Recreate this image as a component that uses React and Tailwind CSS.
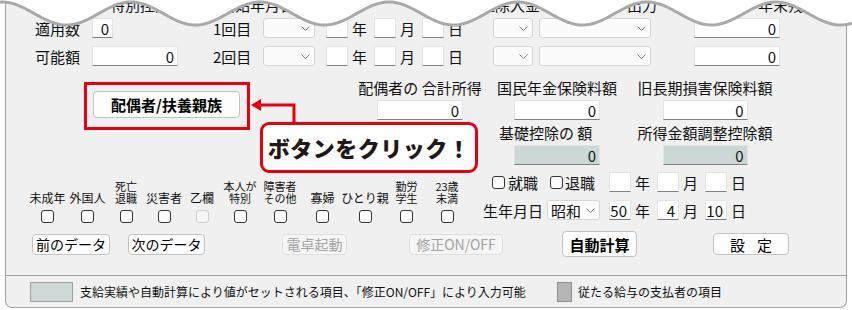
import React from 'react';

const Chevron = () => (
  <svg width="9" height="5" viewBox="0 0 9 5" className="shrink-0">
    <polyline points="0.5,0.5 4.5,4.5 8.5,0.5" fill="none" stroke="#7c7c7c" strokeWidth="1" />
  </svg>
);

const Box = ({ className = '', children, gray }) => (
  <div
    className={`h-[20px] flex items-center justify-end pr-[3px] text-[15px] leading-none border border-[#e4e4e4] border-b-[#808080] ${
      gray ? 'bg-[#cbd8d8]' : 'bg-white'
    } ${className}`}
  >
    {children}
  </div>
);

const Select = ({ className = '', children }) => (
  <div
    className={`h-[20px] flex items-center justify-between pl-[3px] pr-[4px] bg-[#fbfbfb] border border-[#d6d6d6] rounded-[3px] text-[15px] leading-none ${className}`}
  >
    <span>{children}</span>
    <Chevron />
  </div>
);

const Unit = ({ children }) => (
  <div className="w-[26px] pl-[4px] text-[15px] leading-none">{children}</div>
);

const Check = ({ disabled }) => (
  <div
    className={`w-[13px] h-[13px] rounded-[3px] border shrink-0 ${
      disabled ? 'border-[#cdcdcd] bg-[#f5f5f5]' : 'border-[#333333] bg-white'
    }`}
  />
);

const Btn = ({ className = '', children, disabled, bold }) => (
  <div
    className={`flex items-center justify-center border rounded-[4px] leading-none ${
      disabled
        ? 'text-[#a3a3a3] border-[#dedede] bg-[#f5f5f5]'
        : 'text-black border-[#c2c2c2] bg-[#fdfdfd]'
    } ${bold ? 'font-bold text-[15px]' : 'text-[14px]'} ${className}`}
  >
    {children}
  </div>
);

const DateRow = ({ y = '', m = '', d = '' }) => (
  <>
    <Box className="w-[22px]">{y}</Box>
    <Unit>年</Unit>
    <Box className="w-[22px]">{m}</Box>
    <Unit>月</Unit>
    <Box className="w-[22px]">{d}</Box>
    <Unit>日</Unit>
  </>
);

const checks = [
  { w: 'w-[41px]', lines: ['未成年'] },
  { w: 'w-[39px]', lines: ['外国人'] },
  { w: 'w-[38px]', lines: ['死亡', '退職'] },
  { w: 'w-[38px]', lines: ['災害者'] },
  { w: 'w-[38px]', lines: ['乙欄'], disabled: true },
  { w: 'w-[38px]', lines: ['本人が', '特別'] },
  { w: 'w-[42px]', lines: ['障害者', 'その他'] },
  { w: 'w-[43px]', lines: ['寡婦'] },
  { w: 'w-[42px]', lines: ['ひとり親'] },
  { w: 'w-[41px]', lines: ['勤労', '学生'] },
  { w: 'w-[40px]', lines: ['23歳', '未満'] },
];

const Wave = () => {
  const pts = [];
  for (let x = 0; x <= 852; x += 2) {
    const y = 13.5 - 11.5 * Math.cos((2 * Math.PI * (x - 131)) / 129);
    pts.push(`${x},${y.toFixed(2)}`);
  }
  const line = pts.join(' ');
  return (
    <svg className="absolute top-0 left-0" width="852" height="34" viewBox="0 0 852 34">
      <polygon points={`0,0 ${line} 852,0`} fill="#ffffff" />
      <polyline points={line} fill="none" stroke="#a9a9a9" strokeWidth="3" />
    </svg>
  );
};

const App = () => {
  return (
    <div className="relative w-[852px] h-[310px] bg-white overflow-hidden font-['Noto_Sans_CJK_JP',sans-serif] text-[#111111]">
      <div className="ml-[5px] w-[842px] h-[308px] flex flex-col border-x border-b border-[#a0a0a0] rounded-b-[7px] bg-[#f0f0f0]">
        <div className="h-[276px] shrink-0 border-b border-[#a0a0a0] flex flex-col">
          {/* header labels, mostly hidden by the wave */}
          <div className="h-[18px] flex items-start text-[15px] leading-[15px]">
            <span className="ml-[104px] w-[60px] -mt-[3px]">特別控除</span>
            <span className="ml-[50px] w-[75px] -mt-[3px]">開始年月日</span>
            <span className="ml-[185px] w-[60px] -mt-[3px]">控除入金</span>
            <span className="ml-[87px] w-[30px] -mt-[3px]">出力</span>
            <span className="ml-[101px] w-[60px] -mt-[3px]">年末残高</span>
          </div>

          {/* row 1 */}
          <div className="h-[20px] flex items-center">
            <div className="ml-[29px] w-[57px] text-[15px] leading-none">適用数</div>
            <Box className="w-[21px]">0</Box>
            <div className="ml-[100px] w-[50px] text-[15px] leading-none">1回目</div>
            <Select className="w-[52px]" />
            <div className="ml-[11px] flex items-center">
              <DateRow />
            </div>
            <Select className="ml-[23px] w-[40px]" />
            <Select className="ml-[6px] w-[112px]" />
            <Box className="ml-[43px] w-[86px]">0</Box>
          </div>

          {/* row 2 */}
          <div className="mt-[8px] h-[20px] flex items-center">
            <div className="ml-[29px] w-[57px] text-[15px] leading-none">可能額</div>
            <Box className="w-[86px]">0</Box>
            <div className="ml-[35px] w-[50px] text-[15px] leading-none">2回目</div>
            <Select className="w-[52px]" />
            <div className="ml-[11px] flex items-center">
              <DateRow />
            </div>
            <Select className="ml-[23px] w-[40px]" />
            <Select className="ml-[6px] w-[112px]" />
            <Box className="ml-[43px] w-[86px]">0</Box>
          </div>

          {/* spouse / deductions */}
          <div className="mt-[13px] flex items-start">
            <div className="ml-[78px] mt-[3px] border-[3px] border-[#e50012] pl-[6px] pt-[6px] pr-[7px] pb-[9px]">
              <Btn bold className="w-[147px] h-[27px]">配偶者/扶養親族</Btn>
            </div>
            <div className="ml-[105px] w-[130px] flex flex-col items-center">
              <div className="text-[15px] leading-[17px] whitespace-nowrap">配偶者の 合計所得</div>
              <Box className="mt-[4px] w-[86px]">0</Box>
            </div>
            <div className="ml-[7px] w-[130px] flex flex-col items-center">
              <div className="text-[15px] leading-[17px] whitespace-nowrap">国民年金保険料額</div>
              <Box className="mt-[4px] w-[86px]">0</Box>
              <div className="self-start ml-[7px] mt-[4px] text-[15px] leading-[17px] whitespace-nowrap">基礎控除の 額</div>
              <Box gray className="mt-[4px] w-[86px]">0</Box>
            </div>
            <div className="ml-[8px] w-[150px] flex flex-col items-center">
              <div className="text-[15px] leading-[17px] whitespace-nowrap">旧長期損害保険料額</div>
              <Box className="mt-[4px] w-[85px]">0</Box>
              <div className="mt-[4px] text-[15px] leading-[17px] whitespace-nowrap">所得金額調整控除額</div>
              <Box gray className="mt-[4px] w-[85px]">0</Box>
            </div>
          </div>

          {/* checkboxes and dates */}
          <div className="mt-[5px] flex items-start">
            <div className="ml-[21px] pt-[9px] flex">
              {checks.map((c, i) => (
                <div key={i} className={`${c.w} flex flex-col items-center`}>
                  <div
                    className={`h-[25px] flex flex-col justify-end items-center whitespace-nowrap ${
                      c.lines.length > 1 ? 'text-[11px] leading-[12px]' : 'text-[12px] leading-[12px]'
                    }`}
                  >
                    {c.lines.map((l, j) => (
                      <span key={j}>{l}</span>
                    ))}
                  </div>
                  <div className="mt-[6px]">
                    <Check disabled={c.disabled} />
                  </div>
                </div>
              ))}
            </div>
            <div className="ml-[16px] flex flex-col">
              <div className="mt-[2px] h-[20px] flex items-center text-[15px] leading-none">
                <div className="ml-[9px]">
                  <Check />
                </div>
                <span className="ml-[3px] w-[30px]">就職</span>
                <div className="ml-[12px]">
                  <Check />
                </div>
                <span className="ml-[2px] w-[30px]">退職</span>
                <div className="ml-[14px] flex items-center">
                  <DateRow />
                </div>
              </div>
              <div className="mt-[8px] h-[20px] flex items-center text-[15px] leading-none">
                <span className="w-[64px]">生年月日</span>
                <Select className="w-[53px]">昭和</Select>
                <div className="ml-[9px] flex items-center">
                  <DateRow y="50" m="4" d="10" />
                </div>
              </div>
            </div>
          </div>

          {/* buttons */}
          <div className="mt-[8px] h-[26px] flex items-center">
            <Btn className="ml-[26px] w-[78px] h-[21px]">前のデータ</Btn>
            <Btn className="ml-[18px] w-[77px] h-[21px]">次のデータ</Btn>
            <Btn disabled className="ml-[77px] w-[65px] h-[21px]">電卓起動</Btn>
            <Btn disabled className="ml-[62px] w-[94px] h-[21px]">修正ON/OFF</Btn>
            <Btn bold className="ml-[59px] w-[75px] h-[26px]">自動計算</Btn>
            <Btn className="ml-[76px] w-[76px] h-[22px] text-[15px]">
              <span>設</span>
              <span className="ml-[12px]">定</span>
            </Btn>
          </div>
        </div>

        {/* legend */}
        <div className="flex-1 flex items-center text-[12px] leading-none">
          <div className="ml-[24px] w-[43px] h-[20px] bg-[#cdd9d9] border border-[#a0a0a0]" />
          <div className="ml-[7px] w-[477px] whitespace-nowrap">
            支給実績や自動計算により値がセットされる項目、「修正ON/OFF」により入力可能
          </div>
          <div className="w-[15px] h-[20px] bg-[#b5b5b5] border border-[#8c8c8c]" />
          <div className="ml-[6px] whitespace-nowrap">従たる給与の支払者の項目</div>
        </div>
      </div>

      <Wave />

      {/* annotation */}
      <svg className="absolute left-[248px] top-[96px]" width="52" height="30" viewBox="0 0 52 30">
        <polyline points="46,29 46,9 11,9" fill="none" stroke="#e50012" strokeWidth="3" />
        <polygon points="3,9 13,3 13,15" fill="#e50012" />
      </svg>
      <div className="absolute left-[260px] top-[122px] w-[218px] h-[51px] flex items-center justify-center bg-white border-[3px] border-[#e50012] rounded-[9px] text-[22px] font-black text-[#231815] tracking-[0.5px]">
        ボタンをクリック！
      </div>
    </div>
  );
};

export default App;
